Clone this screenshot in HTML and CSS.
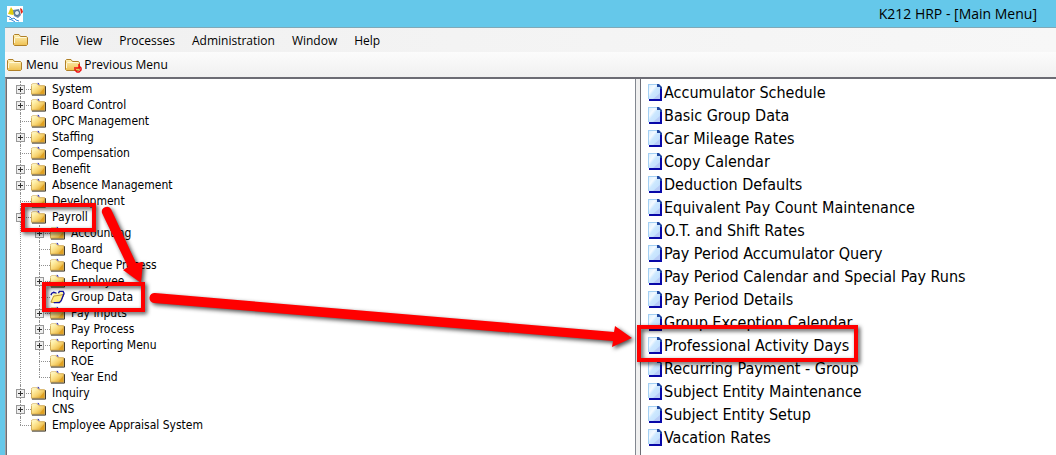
FILE: index.html
```html
<!DOCTYPE html>
<html lang="en">
  <head>
    <meta charset="utf-8" />
    <title>K212 HRP - [Main Menu]</title>
    <link rel="stylesheet" href="styles.css" />
  </head>
  <body>
    <svg class="defs" aria-hidden="true">
      <defs>
        <linearGradient id="gold" x1="0" y1="0" x2="1" y2="1">
          <stop offset="0.2" stop-color="#fff3b0" />
          <stop offset="0.55" stop-color="#f8d470" />
          <stop offset="1" stop-color="#d09418" />
        </linearGradient>
        <linearGradient id="soft" x1="0" y1="0" x2="0" y2="1">
          <stop offset="0" stop-color="#fff2b8" />
          <stop offset="1" stop-color="#eec050" />
        </linearGradient>
        <linearGradient id="paper" x1="0" y1="0" x2="1" y2="1">
          <stop offset="0" stop-color="#d4ecff" />
          <stop offset="0.35" stop-color="#f4faff" />
          <stop offset="0.5" stop-color="#cce8ff" />
          <stop offset="1" stop-color="#c0dcfc" />
        </linearGradient>
      </defs>
      <symbol id="folder" viewBox="0 0 16 14">
        <path d="M7 1h1v1h1" fill="none" stroke="#1010a0" />
        <path d="M0.500 12.500V2.500L1.500 1.500H6.500L8.500 3.500H14.500V12.500Z" fill="url(#gold)" stroke="#d0a850" />
        <path d="M1 4V3L2 2H6" fill="none" stroke="#fff8d0" />
        <path d="M9 12L14 6V12Z" fill="#e0a020" />
        <path d="M1 13.500H15.500V4" fill="none" stroke="#302818" />
      </symbol>
      <symbol id="folder-open" viewBox="0 0 16 14">
        <path d="M1 12L3 4L5 2L8 3L9 2L14 1L13 9L11 12Z" fill="#fff4a8" />
        <path d="M1 12.500L4 6L11 5L15 4L11 12L5 13Z" fill="#ffeb80" stroke="#b89030" />
        <path d="M1 5L2 3L4 2L7 3M9 3L10 1H14L15 3L12 11L10 13H4" fill="none" stroke="#1010a0" stroke-width="1.400" />
      </symbol>
      <symbol id="folder-plain" viewBox="0 0 16 14">
        <path d="M0.500 11.500V2.500L1.500 1.500H6L7.500 3.500H13.500L14.500 4.500V11.500L13.500 12.500H1.500Z" fill="url(#soft)" stroke="#b08028" />
        <path d="M1.500 10V5.500L2.500 4.500H13" fill="none" stroke="#fff8d8" />
      </symbol>
      <symbol id="page" viewBox="0 0 15 17">
        <path d="M1 16H13V4.500" fill="none" stroke="#0808a8" stroke-width="2" />
        <path d="M0 0H9L12 3V15H0Z" fill="url(#paper)" />
        <path d="M0 0.500H9M0.500 0V15" fill="none" stroke="#a4d0f4" />
        <path d="M9 0H11L14 3V5H12V3H9Z" fill="#2048a0" />
        <path d="M5 15L12 9V15Z" fill="#b8ccf6" />
      </symbol>
    </svg>

    <header class="titlebar">
      <svg class="app-icon" viewBox="0 0 16 16" aria-hidden="true">
        <path fill="#fff" d="M0 0h16v16H0z" />
        <path d="M1 8L4 1L8 7L6 9Z" fill="#e0cc10" />
        <path d="M6 4l6-1 2 6-3 3-4-2Z" fill="#6888a8" />
        <circle cx="10" cy="7" r="2.500" fill="#e4f0f8" stroke="#486888" />
        <path d="M13 2l2 1 1 3-2 2Z" fill="#e02818" />
        <path d="M0 10l3 1 2 2 2-1 2 2 3 1M2 13l3 1 3 2" fill="none" stroke="#3888d8" />
      </svg>
      <h1 class="title">K212 HRP - [Main Menu]</h1>
    </header>

    <div class="window">
      <nav class="menubar">
        <svg class="icon"><use href="#folder-plain" /></svg>
        <button>File</button>
        <button>View</button>
        <button>Processes</button>
        <button>Administration</button>
        <button>Window</button>
        <button>Help</button>
      </nav>
      <div class="toolbar">
        <button><svg class="icon"><use href="#folder-plain" /></svg>Menu</button>
        <button>
          <svg class="icon" viewBox="0 0 16 14">
            <use href="#folder-plain" width="16" height="14" />
            <path d="M10 9v3l2 2h2l2-2v-2l-2-2M11 10h3V6" fill="none" stroke="#f01010" stroke-width="1.500" /></svg>Previous Menu
        </button>
      </div>

      <main class="panes">
        <section class="pane tree-pane">
          <ul class="tree">
            <li><button class="toggle" aria-label="Expand System"></button><a href="#"><svg><use href="#folder" /></svg>System</a></li>
            <li><button class="toggle" aria-label="Expand Board Control"></button><a href="#"><svg><use href="#folder" /></svg>Board Control</a></li>
            <li><a href="#"><svg><use href="#folder" /></svg>OPC Management</a></li>
            <li><button class="toggle" aria-label="Expand Staffing"></button><a href="#"><svg><use href="#folder" /></svg>Staffing</a></li>
            <li><a href="#"><svg><use href="#folder" /></svg>Compensation</a></li>
            <li><button class="toggle" aria-label="Expand Benefit"></button><a href="#"><svg><use href="#folder" /></svg>Benefit</a></li>
            <li><button class="toggle" aria-label="Expand Absence Management"></button><a href="#"><svg><use href="#folder" /></svg>Absence Management</a></li>
            <li><a href="#"><svg><use href="#folder" /></svg>Development</a></li>
            <li>
              <button class="toggle open" aria-label="Collapse Payroll"></button><a href="#"><svg><use href="#folder" /></svg>Payroll</a>
              <ul>
                <li><button class="toggle" aria-label="Expand Accounting"></button><a href="#"><svg><use href="#folder" /></svg>Accounting</a></li>
                <li><a href="#"><svg><use href="#folder" /></svg>Board</a></li>
                <li><a href="#"><svg><use href="#folder" /></svg>Cheque Process</a></li>
                <li><button class="toggle" aria-label="Expand Employee"></button><a href="#"><svg><use href="#folder" /></svg>Employee</a></li>
                <li><a href="#"><svg><use href="#folder-open" /></svg>Group Data</a></li>
                <li><button class="toggle" aria-label="Expand Pay Inputs"></button><a href="#"><svg><use href="#folder" /></svg>Pay Inputs</a></li>
                <li><button class="toggle" aria-label="Expand Pay Process"></button><a href="#"><svg><use href="#folder" /></svg>Pay Process</a></li>
                <li><button class="toggle" aria-label="Expand Reporting Menu"></button><a href="#"><svg><use href="#folder" /></svg>Reporting Menu</a></li>
                <li><a href="#"><svg><use href="#folder" /></svg>ROE</a></li>
                <li><a href="#"><svg><use href="#folder" /></svg>Year End</a></li>
              </ul>
            </li>
            <li><button class="toggle" aria-label="Expand Inquiry"></button><a href="#"><svg><use href="#folder" /></svg>Inquiry</a></li>
            <li><button class="toggle" aria-label="Expand CNS"></button><a href="#"><svg><use href="#folder" /></svg>CNS</a></li>
            <li><a href="#"><svg><use href="#folder" /></svg>Employee Appraisal System</a></li>
          </ul>
        </section>

        <section class="pane list-pane">
          <ul class="list">
            <li><a href="#"><svg><use href="#page" /></svg>Accumulator Schedule</a></li>
            <li><a href="#"><svg><use href="#page" /></svg>Basic Group Data</a></li>
            <li><a href="#"><svg><use href="#page" /></svg>Car Mileage Rates</a></li>
            <li><a href="#"><svg><use href="#page" /></svg>Copy Calendar</a></li>
            <li><a href="#"><svg><use href="#page" /></svg>Deduction Defaults</a></li>
            <li><a href="#"><svg><use href="#page" /></svg>Equivalent Pay Count Maintenance</a></li>
            <li><a href="#"><svg><use href="#page" /></svg>O.T. and Shift Rates</a></li>
            <li><a href="#"><svg><use href="#page" /></svg>Pay Period Accumulator Query</a></li>
            <li><a href="#"><svg><use href="#page" /></svg>Pay Period Calendar and Special Pay Runs</a></li>
            <li><a href="#"><svg><use href="#page" /></svg>Pay Period Details</a></li>
            <li><a href="#"><svg><use href="#page" /></svg>Group Exception Calendar</a></li>
            <li><a href="#"><svg><use href="#page" /></svg>Professional Activity Days</a></li>
            <li><a href="#"><svg><use href="#page" /></svg>Recurring Payment - Group</a></li>
            <li><a href="#"><svg><use href="#page" /></svg>Subject Entity Maintenance</a></li>
            <li><a href="#"><svg><use href="#page" /></svg>Subject Entity Setup</a></li>
            <li><a href="#"><svg><use href="#page" /></svg>Vacation Rates</a></li>
          </ul>
        </section>
      </main>
    </div>

    <!-- red boxes and arrows over the window -->
    <svg class="callouts" width="900" height="400" aria-hidden="true">
      <g class="box">
        <rect x="23" y="205" width="71" height="25" />
        <rect x="44" y="284" width="99" height="26" />
        <rect x="639" y="327" width="217" height="33" />
      </g>
      <g class="arrow">
        <path d="M102 213A5 5 0 0 1 111 209L136 263L143 262L141 283L123 270L128 267Z" />
        <path d="M154 303A5 5 0 0 1 155 293L614 332L615 326L632 338L612 347L613 341Z" />
      </g>
    </svg>
  </body>
</html>
```
FILE: styles.css
```css
body {
  margin: 0;
  min-height: 100vh;
  display: flex;
  flex-direction: column;
  background: #65c8ea;
  color: #000;
  font: 12px "Open Sans", sans-serif;
}
ul {
  list-style: none;
  margin: 0;
  padding: 0;
}
button {
  display: flex;
  align-items: center;
  padding: 0;
  border: none;
  background: none;
  color: inherit;
  font: inherit;
}
a {
  color: inherit;
  text-decoration: none;
}
.defs {
  position: absolute;
  width: 0;
  height: 0;
}
.titlebar {
  display: flex;
  align-items: center;
  justify-content: space-between;
  height: 27px;
  padding: 0 19px 0 7px;
}
.app-icon {
  width: 16px;
  height: 16px;
}
.title {
  margin: 0;
  font-size: 14px;
  font-weight: normal;
}
.window {
  flex: 1;
  display: flex;
  flex-direction: column;
  margin-left: 5px;
  border-top: 1px solid #7fa9b8;
}
.icon {
  width: 16px;
  height: 14px;
  overflow: visible;
}
.menubar {
  display: flex;
  align-items: center;
  gap: 17px;
  height: 24px;
  padding-left: 8px;
  background: linear-gradient(90deg, #f0f0f0, #f7f7f7);
}
.menubar .icon {
  margin-right: -6px;
}
.toolbar {
  display: flex;
  align-items: center;
  gap: 7px;
  height: 25px;
  padding-left: 2px;
  background: linear-gradient(#fcfcfc, #f0f0f0);
}
.toolbar button {
  gap: 3px;
}
.panes {
  flex: 1;
  display: flex;
  gap: 4px;
  border-top: 2px solid #6c6c74;
  border-left: 1px solid #a0a0a0;
  background: #f0f0f0;
}
.pane {
  box-sizing: border-box;
  background: #fff;
  border-left: 1px solid #6c6c74;
  padding-top: 2px;
}
.tree-pane {
  flex: 0 0 60%;
  border-right: 1px solid #828790;
}
.list-pane {
  flex: 1;
}
.tree {
  padding-left: 9px;
  font: 12px/16px "DejaVu Sans Condensed", sans-serif;
}
.tree li {
  position: relative;
  padding-left: 15px;
}
.tree ul {
  margin-left: 4px;
}
.tree a {
  position: relative;
  display: flex;
  align-items: center;
  gap: 6px;
}
.tree svg {
  width: 15px;
  height: 14px;
}
/* dotted guide lines */
.tree li::before,
.tree li::after {
  content: "";
  position: absolute;
  left: 4px;
  top: 0;
}
.tree li::before {
  height: 100%;
  border-left: 1px dotted #909090;
}
.tree li:last-child::before {
  height: 8px;
}
.tree li::after {
  top: 8px;
  width: 11px;
  border-top: 1px dotted #909090;
}
.toggle {
  position: absolute;
  z-index: 1;
  left: 0;
  top: 4px;
  width: 9px;
  height: 9px;
  border: 1px solid #989898;
  background:
    linear-gradient(#303030, #303030) center / 5px 1px no-repeat,
    linear-gradient(#303030, #303030) center / 1px 5px no-repeat,
    #eee;
}
.toggle.open {
  background:
    linear-gradient(#303030, #303030) center / 5px 1px no-repeat,
    #eee;
}
.list {
  padding-left: 7px;
  font: 16px/23px "DejaVu Sans Condensed", sans-serif;
}
.list a {
  display: flex;
  align-items: center;
  gap: 1px;
}
.list svg {
  width: 15px;
  height: 17px;
}
.callouts {
  position: absolute;
  left: 0;
  top: 0;
  z-index: 2;
  pointer-events: none;
  filter: drop-shadow(2px 2px 2px rgba(0, 0, 0, 0.7));
}
.box rect {
  fill: none;
  stroke: #f00;
  stroke-width: 4;
}
.arrow path {
  fill: #f00;
}
```
